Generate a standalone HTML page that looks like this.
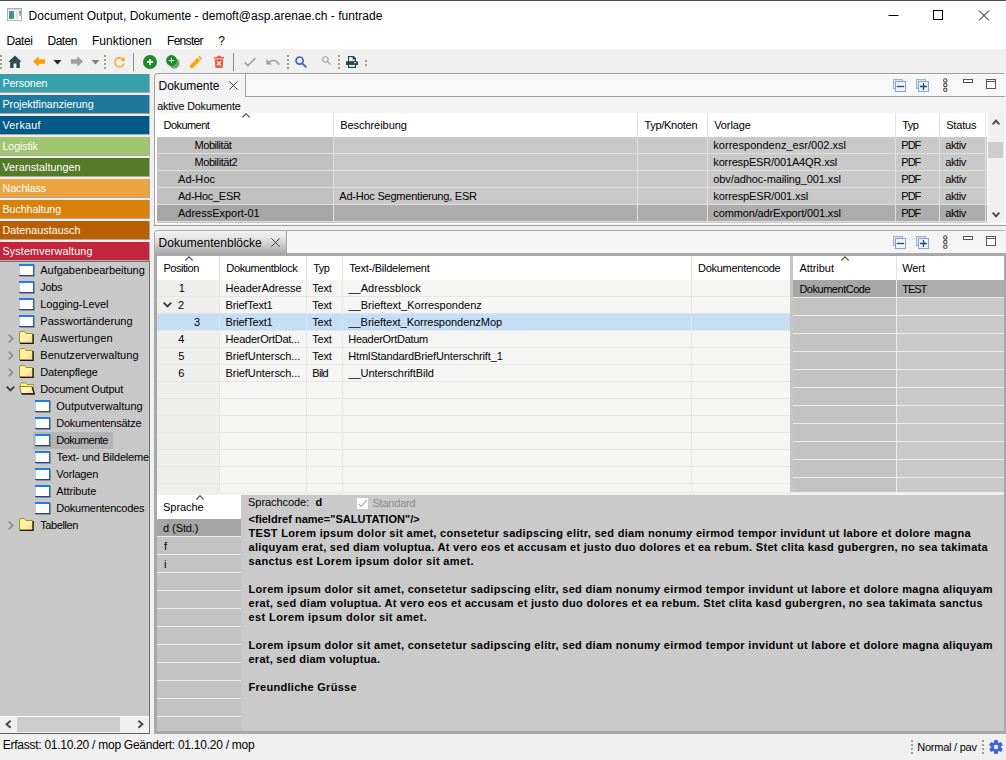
<!DOCTYPE html>
<html lang="de"><head><meta charset="utf-8"><title>Document Output, Dokumente</title>
<style>
html,body{margin:0;padding:0;background:#f0f0f0}
body{width:1006px;height:760px;overflow:hidden;background:#f0f0f0;position:relative;font-family:"Liberation Sans",sans-serif;font-size:11px;color:#000}
.b{position:absolute;box-sizing:border-box}
.t{position:absolute;white-space:pre;display:block}
svg{position:absolute;overflow:visible}
</style></head><body>

<div class="b" style="left:0px;top:0px;width:1006px;height:49px;background:#fff;"></div>
<div class="b" style="left:0px;top:0px;width:1006px;height:1px;background:#4a4a4a;"></div>
<svg style="left:7px;top:8px" width="15" height="13" viewBox="0 0 15 13"><defs><linearGradient id="ga" x1="0" y1="0" x2="1" y2="1"><stop offset="0" stop-color="#5a86c8"/><stop offset="0.500" stop-color="#3f9080"/><stop offset="1" stop-color="#45ad58"/></linearGradient><linearGradient id="gb" x1="0" y1="0" x2="0" y2="1"><stop offset="0" stop-color="#6a90c8"/><stop offset="1" stop-color="#a8dc98"/></linearGradient></defs><rect x="0.500" y="0.500" width="14" height="12" fill="#fbfbfb" stroke="#aab0b8"/><rect x="1" y="1" width="13" height="1" fill="#d4d8dc"/><rect x="2" y="3" width="5" height="8" fill="url(#ga)"/><rect x="8.500" y="3" width="2.500" height="8" fill="#e2e2e2"/><rect x="12" y="3" width="2" height="5" fill="url(#gb)"/><rect x="1" y="12" width="14" height="1" fill="#c0c4c8" opacity=".5"/></svg>
<span class="t " style="left:28.50px;top:8px;font-size:12px;line-height:16px;color:#000;letter-spacing:0.026px;">Document Output, Dokumente - demoft@asp.arenae.ch - funtrade</span>
<svg style="left:880px;top:8px" width="120" height="16" viewBox="0 0 120 16" fill="none" stroke="#000" stroke-width="1"><path d="M8.500 7.500h10"/><rect x="53.500" y="2.500" width="9" height="9"/><path d="M99 2.500l10 10M109 2.500l-10 10"/></svg>
<span class="t " style="left:6.50px;top:33px;font-size:12px;line-height:16px;color:#000;letter-spacing:-0.377px;">Datei</span>
<span class="t " style="left:47.50px;top:33px;font-size:12px;line-height:16px;color:#000;letter-spacing:-0.504px;">Daten</span>
<span class="t " style="left:92.00px;top:33px;font-size:12px;line-height:16px;color:#000;letter-spacing:0.025px;">Funktionen</span>
<span class="t " style="left:167.00px;top:33px;font-size:12px;line-height:16px;color:#000;letter-spacing:-0.697px;">Fenster</span>
<span class="t " style="left:218.30px;top:33px;font-size:12px;line-height:16px;color:#000;">?</span>
<div class="b" style="left:0px;top:49px;width:1006px;height:24px;background:#f0f0f0;"></div>
<div class="b" style="left:0px;top:55px;width:2px;height:2px;background:#a89c8a;"></div>
<div class="b" style="left:0px;top:59px;width:2px;height:2px;background:#a89c8a;"></div>
<div class="b" style="left:0px;top:63px;width:2px;height:2px;background:#a89c8a;"></div>
<div class="b" style="left:0px;top:67px;width:2px;height:2px;background:#a89c8a;"></div>
<svg style="left:8px;top:55px" width="14" height="13" viewBox="0 0 14 13"><path d="M7 0.500L0.300 6.800H2.200V13H5.600V8.600H8.400V13H11.800V6.800H13.700Z" fill="#2f4f4f"/></svg>
<svg style="left:33px;top:56px" width="12" height="11" viewBox="0 0 12 11"><path d="M0 5.500L5.800 0.200V3.300H12V7.700H5.800V10.800Z" fill="#ff9c0c"/></svg>
<svg style="left:53px;top:60px" width="9" height="5" viewBox="0 0 9 5"><path d="M0.500 0H8.500L4.500 4.500Z" fill="#222"/></svg>
<svg style="left:71px;top:56px" width="12" height="11" viewBox="0 0 12 11"><path d="M12 5.500L6.200 0.200V3.300H0V7.700H6.200V10.800Z" fill="#9e9e9e"/></svg>
<svg style="left:91px;top:60px" width="9" height="5" viewBox="0 0 9 5"><path d="M0.500 0H8.500L4.500 4.500Z" fill="#808080"/></svg>
<div class="b" style="left:104px;top:55px;width:2px;height:2px;background:#a89c8a;"></div>
<div class="b" style="left:104px;top:59px;width:2px;height:2px;background:#a89c8a;"></div>
<div class="b" style="left:104px;top:63px;width:2px;height:2px;background:#a89c8a;"></div>
<div class="b" style="left:104px;top:67px;width:2px;height:2px;background:#a89c8a;"></div>
<svg style="left:113px;top:56px" width="13" height="12" viewBox="0 0 13 12" fill="none"><path d="M9.800 3.200A4.600 4.600 0 1 0 10.900 7.400" stroke="#ffa010" stroke-width="1.300"/><path d="M11.600 0.800V4.900H7.500Z" fill="#ffa010"/></svg>
<div class="b" style="left:133px;top:53px;width:1px;height:18px;background:#8a8a8a;"></div>
<svg style="left:143px;top:55px" width="14" height="14" viewBox="0 0 14 14"><circle cx="7" cy="7" r="7" fill="#1e8a2b"/><path d="M7 4V10M4 7H10" stroke="#f4fff4" stroke-width="1.900"/></svg>
<svg style="left:166px;top:55px" width="14" height="14" viewBox="0 0 14 14"><circle cx="8.300" cy="8.300" r="5.200" fill="#6aa870"/><circle cx="5.500" cy="5.500" r="5.400" fill="#1e8a2b"/><path d="M5.500 2.800V8.200M2.800 5.500H8.200" stroke="#d8f0d8" stroke-width="1"/></svg>
<svg style="left:190px;top:56px" width="12" height="12" viewBox="0 0 12 12"><path d="M0 12V9.300L7.500 1.800L10.200 4.500L2.700 12Z" fill="#ffa200"/><path d="M8.300 1L9.100 0.200Q9.500 -0.100 9.900 0.200L11.800 2.100Q12.100 2.500 11.800 2.900L11 3.700Z" fill="#ffa200"/></svg>
<svg style="left:213px;top:55px" width="12" height="13" viewBox="0 0 12 13"><path d="M1 2H4L4.600 0.800H7.400L8 2H11V3.400H1Z" fill="#f25c41"/><path d="M1.700 4.200H10.300L9.800 12Q9.700 13 8.700 13H3.300Q2.300 13 2.200 12Z" fill="#f25c41"/><path d="M4.300 6.500L7.700 10.300M7.700 6.500L4.300 10.300" stroke="#fff" stroke-width="1.300"/></svg>
<div class="b" style="left:233px;top:53px;width:1px;height:18px;background:#8a8a8a;"></div>
<svg style="left:244px;top:57px" width="12" height="10" viewBox="0 0 12 10" fill="none"><path d="M0.700 5.400L4 8.600L11.400 1" stroke="#9e9e9e" stroke-width="1.500"/></svg>
<svg style="left:266px;top:58px" width="14" height="8" viewBox="0 0 14 8" fill="none"><path d="M2.500 4.500Q8.500 -0.500 13.300 6.500" stroke="#9e9e9e" stroke-width="1.500"/><path d="M0.300 0.800V6.600H6Z" fill="#9e9e9e"/></svg>
<div class="b" style="left:287px;top:55px;width:2px;height:2px;background:#a89c8a;"></div>
<div class="b" style="left:287px;top:59px;width:2px;height:2px;background:#a89c8a;"></div>
<div class="b" style="left:287px;top:63px;width:2px;height:2px;background:#a89c8a;"></div>
<div class="b" style="left:287px;top:67px;width:2px;height:2px;background:#a89c8a;"></div>
<svg style="left:295px;top:56px" width="12" height="12" viewBox="0 0 12 12" fill="none"><circle cx="4.600" cy="4.600" r="3.600" stroke="#3d62e0" stroke-width="1.700"/><path d="M7.300 7.300L11.300 11.300" stroke="#3d62e0" stroke-width="1.900"/></svg>
<svg style="left:322px;top:56px" width="9" height="9" viewBox="0 0 9 9" fill="none"><circle cx="3.400" cy="3.400" r="2.700" stroke="#a0a0a0" stroke-width="1.100"/><path d="M5.400 5.400L8.600 8.600" stroke="#a0a0a0" stroke-width="1.200"/></svg>
<div class="b" style="left:338px;top:55px;width:2px;height:2px;background:#a89c8a;"></div>
<div class="b" style="left:338px;top:59px;width:2px;height:2px;background:#a89c8a;"></div>
<div class="b" style="left:338px;top:63px;width:2px;height:2px;background:#a89c8a;"></div>
<div class="b" style="left:338px;top:67px;width:2px;height:2px;background:#a89c8a;"></div>
<svg style="left:346px;top:56px" width="12" height="12" viewBox="0 0 12 12"><path d="M2.600 0.600H7.400L9.400 2.600V6H2.600Z" fill="#fff" stroke="#1f4949" stroke-width="1.200"/><path d="M6.600 0.600H7.400L9.400 2.600V3.400H6.600Z" fill="#1f4949"/><rect x="0" y="5.200" width="12" height="3.700" rx="0.500" fill="#1f4949"/><rect x="7.900" y="6.200" width="2.200" height="1.100" fill="#dfeaea"/><rect x="2.600" y="8.300" width="6.800" height="3.100" fill="#fff" stroke="#1f4949" stroke-width="1.200"/></svg>
<div class="b" style="left:365px;top:60px;width:2px;height:2px;background:#a89c8a;"></div>
<div class="b" style="left:365px;top:64px;width:2px;height:2px;background:#a89c8a;"></div>
<div class="b" style="left:0px;top:74px;width:150px;height:187px;background:#f0ecec;"></div>
<div class="b" style="left:0px;top:74px;width:150px;height:19px;background:#b0a8a8;"></div>
<div class="b" style="left:0px;top:74px;width:149px;height:18px;background:#38a0ab;"></div>
<span class="t " style="left:2.50px;top:75px;font-size:10.7px;line-height:16px;color:#fff;letter-spacing:-0.115px;">Personen</span>
<div class="b" style="left:0px;top:95px;width:150px;height:19px;background:#b0a8a8;"></div>
<div class="b" style="left:0px;top:95px;width:149px;height:18px;background:#1e789c;"></div>
<span class="t " style="left:2.50px;top:96px;font-size:10.7px;line-height:16px;color:#fff;letter-spacing:-0.020px;">Projektfinanzierung</span>
<div class="b" style="left:0px;top:116px;width:150px;height:19px;background:#b0a8a8;"></div>
<div class="b" style="left:0px;top:116px;width:149px;height:18px;background:#005a85;"></div>
<span class="t " style="left:2.50px;top:117px;font-size:10.7px;line-height:16px;color:#fff;letter-spacing:0.282px;">Verkauf</span>
<div class="b" style="left:0px;top:137px;width:150px;height:19px;background:#b0a8a8;"></div>
<div class="b" style="left:0px;top:137px;width:149px;height:18px;background:#a0c56e;"></div>
<span class="t " style="left:2.50px;top:138px;font-size:10.7px;line-height:16px;color:#fff;letter-spacing:-0.115px;">Logistik</span>
<div class="b" style="left:0px;top:158px;width:150px;height:19px;background:#b0a8a8;"></div>
<div class="b" style="left:0px;top:158px;width:149px;height:18px;background:#557a2a;"></div>
<span class="t " style="left:2.50px;top:159px;font-size:10.7px;line-height:16px;color:#fff;letter-spacing:0.047px;">Veranstaltungen</span>
<div class="b" style="left:0px;top:179px;width:150px;height:19px;background:#b0a8a8;"></div>
<div class="b" style="left:0px;top:179px;width:149px;height:18px;background:#eba440;"></div>
<span class="t " style="left:2.50px;top:180px;font-size:10.7px;line-height:16px;color:#fff;letter-spacing:-0.037px;">Nachlass</span>
<div class="b" style="left:0px;top:200px;width:150px;height:19px;background:#b0a8a8;"></div>
<div class="b" style="left:0px;top:200px;width:149px;height:18px;background:#d8820c;"></div>
<span class="t " style="left:2.50px;top:201px;font-size:10.7px;line-height:16px;color:#fff;letter-spacing:-0.074px;">Buchhaltung</span>
<div class="b" style="left:0px;top:221px;width:150px;height:19px;background:#b0a8a8;"></div>
<div class="b" style="left:0px;top:221px;width:149px;height:18px;background:#ba5e02;"></div>
<span class="t " style="left:2.50px;top:222px;font-size:10.7px;line-height:16px;color:#fff;letter-spacing:0.052px;">Datenaustausch</span>
<div class="b" style="left:0px;top:242px;width:150px;height:19px;background:#b0a8a8;"></div>
<div class="b" style="left:0px;top:242px;width:149px;height:18px;background:#c1263c;"></div>
<span class="t " style="left:2.50px;top:243px;font-size:10.7px;line-height:16px;color:#fff;letter-spacing:0.172px;">Systemverwaltung</span>
<div class="b" style="left:0px;top:261px;width:150px;height:473px;background:#c8c8c8;border-top:1px solid #707070;border-right:1px solid #707070;border-bottom:1px solid #606060;"></div>
<svg style="left:19px;top:264px" width="16" height="13" viewBox="0 0 16 13"><rect x="15" y="1" width="1" height="12" fill="#77776a" opacity=".65"/><rect x="1" y="12" width="14" height="1" fill="#77776a" opacity=".65"/><rect x="0" y="0" width="15" height="12" fill="#1c7eee"/><rect x="0" y="2" width="1" height="9" fill="#a8d4ff"/><rect x="14" y="1" width="1" height="11" fill="#2262b4"/><rect x="0" y="11" width="15" height="1" fill="#2c3ca4"/><rect x="1" y="2" width="13" height="9" fill="#fff"/></svg>
<span class="t " style="left:40.30px;top:262px;font-size:11px;line-height:16px;color:#000;letter-spacing:-0.039px;">Aufgabenbearbeitung</span>
<svg style="left:19px;top:281px" width="16" height="13" viewBox="0 0 16 13"><rect x="15" y="1" width="1" height="12" fill="#77776a" opacity=".65"/><rect x="1" y="12" width="14" height="1" fill="#77776a" opacity=".65"/><rect x="0" y="0" width="15" height="12" fill="#1c7eee"/><rect x="0" y="2" width="1" height="9" fill="#a8d4ff"/><rect x="14" y="1" width="1" height="11" fill="#2262b4"/><rect x="0" y="11" width="15" height="1" fill="#2c3ca4"/><rect x="1" y="2" width="13" height="9" fill="#fff"/></svg>
<span class="t " style="left:40.30px;top:279px;font-size:11px;line-height:16px;color:#000;letter-spacing:-0.344px;">Jobs</span>
<svg style="left:19px;top:298px" width="16" height="13" viewBox="0 0 16 13"><rect x="15" y="1" width="1" height="12" fill="#77776a" opacity=".65"/><rect x="1" y="12" width="14" height="1" fill="#77776a" opacity=".65"/><rect x="0" y="0" width="15" height="12" fill="#1c7eee"/><rect x="0" y="2" width="1" height="9" fill="#a8d4ff"/><rect x="14" y="1" width="1" height="11" fill="#2262b4"/><rect x="0" y="11" width="15" height="1" fill="#2c3ca4"/><rect x="1" y="2" width="13" height="9" fill="#fff"/></svg>
<span class="t " style="left:40.30px;top:296px;font-size:11px;line-height:16px;color:#000;letter-spacing:-0.084px;">Logging-Level</span>
<svg style="left:19px;top:315px" width="16" height="13" viewBox="0 0 16 13"><rect x="15" y="1" width="1" height="12" fill="#77776a" opacity=".65"/><rect x="1" y="12" width="14" height="1" fill="#77776a" opacity=".65"/><rect x="0" y="0" width="15" height="12" fill="#1c7eee"/><rect x="0" y="2" width="1" height="9" fill="#a8d4ff"/><rect x="14" y="1" width="1" height="11" fill="#2262b4"/><rect x="0" y="11" width="15" height="1" fill="#2c3ca4"/><rect x="1" y="2" width="13" height="9" fill="#fff"/></svg>
<span class="t " style="left:40.30px;top:313px;font-size:11px;line-height:16px;color:#000;letter-spacing:0.039px;">Passwortänderung</span>
<svg style="left:19px;top:331px" width="15" height="13" viewBox="0 0 15 13"><path d="M0.500 12V2Q0.500 0.500 2 0.500H5.500L7 2.500H13.500V12Z" fill="#fff29e" stroke="#9c9624"/><path d="M6 11.500L13 4.500V11.500Z" fill="#ffd0a6" opacity=".75"/><path d="M14.200 3V12.300H1" fill="none" stroke="#1a1a10" stroke-width="1.200"/></svg>
<svg style="left:8px;top:334px" width="6" height="9" viewBox="0 0 6 9" fill="none"><path d="M0.800 0.700L4.600 4.500L0.800 8.300" stroke="#8c8c8c" stroke-width="1.700"/></svg>
<span class="t " style="left:40.30px;top:330px;font-size:11px;line-height:16px;color:#000;letter-spacing:0.180px;">Auswertungen</span>
<svg style="left:19px;top:348px" width="15" height="13" viewBox="0 0 15 13"><path d="M0.500 12V2Q0.500 0.500 2 0.500H5.500L7 2.500H13.500V12Z" fill="#fff29e" stroke="#9c9624"/><path d="M6 11.500L13 4.500V11.500Z" fill="#ffd0a6" opacity=".75"/><path d="M14.200 3V12.300H1" fill="none" stroke="#1a1a10" stroke-width="1.200"/></svg>
<svg style="left:8px;top:351px" width="6" height="9" viewBox="0 0 6 9" fill="none"><path d="M0.800 0.700L4.600 4.500L0.800 8.300" stroke="#8c8c8c" stroke-width="1.700"/></svg>
<span class="t " style="left:40.30px;top:347px;font-size:11px;line-height:16px;color:#000;letter-spacing:0.058px;">Benutzerverwaltung</span>
<svg style="left:19px;top:365px" width="15" height="13" viewBox="0 0 15 13"><path d="M0.500 12V2Q0.500 0.500 2 0.500H5.500L7 2.500H13.500V12Z" fill="#fff29e" stroke="#9c9624"/><path d="M6 11.500L13 4.500V11.500Z" fill="#ffd0a6" opacity=".75"/><path d="M14.200 3V12.300H1" fill="none" stroke="#1a1a10" stroke-width="1.200"/></svg>
<svg style="left:8px;top:368px" width="6" height="9" viewBox="0 0 6 9" fill="none"><path d="M0.800 0.700L4.600 4.500L0.800 8.300" stroke="#8c8c8c" stroke-width="1.700"/></svg>
<span class="t " style="left:40.30px;top:364px;font-size:11px;line-height:16px;color:#000;letter-spacing:-0.172px;">Datenpflege</span>
<svg style="left:19px;top:382px" width="16" height="13" viewBox="0 0 16 13"><path d="M1.500 9V2.500Q1.500 1 3 0.800H6.500L8 2.500H14.500V5" fill="#fff29e" stroke="#9c9624"/><path d="M0.500 4.500H13L15 11.500H2.500Z" fill="#fff6b8" stroke="#8c8620"/><path d="M7 11L12.500 5.500L14 11Z" fill="#ffd0a6" opacity=".7"/><path d="M2.500 12H15.300L13.300 5" fill="none" stroke="#1a1a10" stroke-width="1.300"/></svg>
<svg style="left:6px;top:386px" width="9" height="6" viewBox="0 0 9 6" fill="none"><path d="M0.700 0.700L4.500 4.500L8.300 0.700" stroke="#3c3c3c" stroke-width="1.900"/></svg>
<span class="t " style="left:40.30px;top:381px;font-size:11px;line-height:16px;color:#000;letter-spacing:-0.236px;">Document Output</span>
<svg style="left:35px;top:400px" width="16" height="13" viewBox="0 0 16 13"><rect x="15" y="1" width="1" height="12" fill="#77776a" opacity=".65"/><rect x="1" y="12" width="14" height="1" fill="#77776a" opacity=".65"/><rect x="0" y="0" width="15" height="12" fill="#1c7eee"/><rect x="0" y="2" width="1" height="9" fill="#a8d4ff"/><rect x="14" y="1" width="1" height="11" fill="#2262b4"/><rect x="0" y="11" width="15" height="1" fill="#2c3ca4"/><rect x="1" y="2" width="13" height="9" fill="#fff"/></svg>
<span class="t " style="left:56.30px;top:398px;font-size:11px;line-height:16px;color:#000;letter-spacing:0.012px;">Outputverwaltung</span>
<svg style="left:35px;top:417px" width="16" height="13" viewBox="0 0 16 13"><rect x="15" y="1" width="1" height="12" fill="#77776a" opacity=".65"/><rect x="1" y="12" width="14" height="1" fill="#77776a" opacity=".65"/><rect x="0" y="0" width="15" height="12" fill="#1c7eee"/><rect x="0" y="2" width="1" height="9" fill="#a8d4ff"/><rect x="14" y="1" width="1" height="11" fill="#2262b4"/><rect x="0" y="11" width="15" height="1" fill="#2c3ca4"/><rect x="1" y="2" width="13" height="9" fill="#fff"/></svg>
<span class="t " style="left:56.30px;top:415px;font-size:11px;line-height:16px;color:#000;letter-spacing:-0.247px;">Dokumentensätze</span>
<div class="b" style="left:33px;top:432px;width:80px;height:17px;background:#b4b4b4;"></div>
<svg style="left:35px;top:434px" width="16" height="13" viewBox="0 0 16 13"><rect x="15" y="1" width="1" height="12" fill="#77776a" opacity=".65"/><rect x="1" y="12" width="14" height="1" fill="#77776a" opacity=".65"/><rect x="0" y="0" width="15" height="12" fill="#1c7eee"/><rect x="0" y="2" width="1" height="9" fill="#a8d4ff"/><rect x="14" y="1" width="1" height="11" fill="#2262b4"/><rect x="0" y="11" width="15" height="1" fill="#2c3ca4"/><rect x="1" y="2" width="13" height="9" fill="#fff"/></svg>
<span class="t " style="left:56.30px;top:432px;font-size:11px;line-height:16px;color:#000;letter-spacing:-0.519px;">Dokumente</span>
<svg style="left:35px;top:451px" width="16" height="13" viewBox="0 0 16 13"><rect x="15" y="1" width="1" height="12" fill="#77776a" opacity=".65"/><rect x="1" y="12" width="14" height="1" fill="#77776a" opacity=".65"/><rect x="0" y="0" width="15" height="12" fill="#1c7eee"/><rect x="0" y="2" width="1" height="9" fill="#a8d4ff"/><rect x="14" y="1" width="1" height="11" fill="#2262b4"/><rect x="0" y="11" width="15" height="1" fill="#2c3ca4"/><rect x="1" y="2" width="13" height="9" fill="#fff"/></svg>
<span class="t " style="left:56.40px;top:449px;font-size:11px;line-height:16px;color:#000;letter-spacing:-0.220px;max-width:92.29999999999998px;overflow:hidden;">Text- und Bildelemente</span>
<svg style="left:35px;top:468px" width="16" height="13" viewBox="0 0 16 13"><rect x="15" y="1" width="1" height="12" fill="#77776a" opacity=".65"/><rect x="1" y="12" width="14" height="1" fill="#77776a" opacity=".65"/><rect x="0" y="0" width="15" height="12" fill="#1c7eee"/><rect x="0" y="2" width="1" height="9" fill="#a8d4ff"/><rect x="14" y="1" width="1" height="11" fill="#2262b4"/><rect x="0" y="11" width="15" height="1" fill="#2c3ca4"/><rect x="1" y="2" width="13" height="9" fill="#fff"/></svg>
<span class="t " style="left:56.30px;top:466px;font-size:11px;line-height:16px;color:#000;letter-spacing:-0.204px;">Vorlagen</span>
<svg style="left:35px;top:485px" width="16" height="13" viewBox="0 0 16 13"><rect x="15" y="1" width="1" height="12" fill="#77776a" opacity=".65"/><rect x="1" y="12" width="14" height="1" fill="#77776a" opacity=".65"/><rect x="0" y="0" width="15" height="12" fill="#1c7eee"/><rect x="0" y="2" width="1" height="9" fill="#a8d4ff"/><rect x="14" y="1" width="1" height="11" fill="#2262b4"/><rect x="0" y="11" width="15" height="1" fill="#2c3ca4"/><rect x="1" y="2" width="13" height="9" fill="#fff"/></svg>
<span class="t " style="left:56.30px;top:483px;font-size:11px;line-height:16px;color:#000;letter-spacing:-0.108px;">Attribute</span>
<svg style="left:35px;top:502px" width="16" height="13" viewBox="0 0 16 13"><rect x="15" y="1" width="1" height="12" fill="#77776a" opacity=".65"/><rect x="1" y="12" width="14" height="1" fill="#77776a" opacity=".65"/><rect x="0" y="0" width="15" height="12" fill="#1c7eee"/><rect x="0" y="2" width="1" height="9" fill="#a8d4ff"/><rect x="14" y="1" width="1" height="11" fill="#2262b4"/><rect x="0" y="11" width="15" height="1" fill="#2c3ca4"/><rect x="1" y="2" width="13" height="9" fill="#fff"/></svg>
<span class="t " style="left:56.30px;top:500px;font-size:11px;line-height:16px;color:#000;letter-spacing:-0.258px;">Dokumentencodes</span>
<svg style="left:19px;top:518px" width="15" height="13" viewBox="0 0 15 13"><path d="M0.500 12V2Q0.500 0.500 2 0.500H5.500L7 2.500H13.500V12Z" fill="#fff29e" stroke="#9c9624"/><path d="M6 11.500L13 4.500V11.500Z" fill="#ffd0a6" opacity=".75"/><path d="M14.200 3V12.300H1" fill="none" stroke="#1a1a10" stroke-width="1.200"/></svg>
<svg style="left:8px;top:521px" width="6" height="9" viewBox="0 0 6 9" fill="none"><path d="M0.800 0.700L4.600 4.500L0.800 8.300" stroke="#8c8c8c" stroke-width="1.700"/></svg>
<span class="t " style="left:40.30px;top:517px;font-size:11px;line-height:16px;color:#000;letter-spacing:-0.425px;">Tabellen</span>
<div class="b" style="left:0px;top:716px;width:149px;height:1px;background:#fff;"></div>
<div class="b" style="left:0px;top:717px;width:149px;height:16px;background:#f0f0f0;"></div>
<div class="b" style="left:17px;top:717px;width:103px;height:15px;background:#cdcdcd;"></div>
<svg style="left:5px;top:720px" width="7" height="8" viewBox="0 0 7 8" fill="none"><path d="M5.600 0.700L1.600 4.200L5.600 7.700" stroke="#4a4a4a" stroke-width="2"/></svg>
<svg style="left:137px;top:720px" width="7" height="8" viewBox="0 0 7 8" fill="none"><path d="M1.400 0.700L5.400 4.200L1.400 7.700" stroke="#4a4a4a" stroke-width="2"/></svg>
<span class="t " style="left:2.75px;top:737px;font-size:12px;line-height:16px;color:#000;letter-spacing:-0.262px;">Erfasst: 01.10.20 / mop Geändert: 01.10.20 / mop</span>
<div class="b" style="left:911px;top:740px;width:2px;height:2px;background:#a89c8a;"></div>
<div class="b" style="left:911px;top:744px;width:2px;height:2px;background:#a89c8a;"></div>
<div class="b" style="left:911px;top:748px;width:2px;height:2px;background:#a89c8a;"></div>
<div class="b" style="left:911px;top:752px;width:2px;height:2px;background:#a89c8a;"></div>
<span class="t " style="left:917.25px;top:739px;font-size:11px;line-height:16px;color:#000;letter-spacing:-0.245px;">Normal / pav</span>
<div class="b" style="left:982px;top:740px;width:2px;height:2px;background:#a89c8a;"></div>
<div class="b" style="left:982px;top:744px;width:2px;height:2px;background:#a89c8a;"></div>
<div class="b" style="left:982px;top:748px;width:2px;height:2px;background:#a89c8a;"></div>
<div class="b" style="left:982px;top:752px;width:2px;height:2px;background:#a89c8a;"></div>
<svg style="left:989px;top:740px" width="14" height="14" viewBox="0 0 14 14"><g fill="#3d64de"><circle cx="7" cy="7" r="5.100"/><rect x="5" y="0" width="4" height="14" rx="1.200"/><rect x="5" y="0" width="4" height="14" rx="1.200" transform="rotate(60 7 7)"/><rect x="5" y="0" width="4" height="14" rx="1.200" transform="rotate(120 7 7)"/></g><circle cx="7" cy="7" r="2.200" fill="#f0f0f0"/></svg>
<div class="b" style="left:154px;top:73px;width:852px;height:153px;background:#f4f4f4;border:1px solid #a0a0a0;border-right:none;border-radius:4px 4px 0 0;"></div>
<div class="b" style="left:246px;top:74px;width:760px;height:22px;background:#f8f8f8;"></div>
<div class="b" style="left:245px;top:74px;width:1px;height:23px;background:#a0a0a0;"></div>
<div class="b" style="left:245px;top:96px;width:760px;height:1px;background:#a0a0a0;"></div>
<span class="t " style="left:158.60px;top:78px;font-size:12px;line-height:16px;color:#000;letter-spacing:-0.071px;">Dokumente</span>
<svg style="left:229px;top:81px" width="9" height="9" viewBox="0 0 9 9" fill="none"><path d="M0.400 0.400L8.600 8.600M8.600 0.400L0.400 8.600" stroke="#2a2a2a" stroke-width="0.900"/></svg>
<svg style="left:893px;top:79px" width="14" height="13" viewBox="0 0 14 13" fill="none"><rect x="0.500" y="0.500" width="9" height="9" fill="#d4e6f8" stroke="#9db2d0"/><rect x="2.500" y="2.500" width="10" height="10" fill="#edf3fb" stroke="#8fa2c0"/><path d="M3.800 7.500H11.200" stroke="#1c4a78" stroke-width="1.300"/></svg>
<svg style="left:916px;top:79px" width="14" height="13" viewBox="0 0 14 13" fill="none"><rect x="0.500" y="0.500" width="9" height="9" fill="#d4e6f8" stroke="#9db2d0"/><rect x="2.500" y="2.500" width="10" height="10" fill="#edf3fb" stroke="#8fa2c0"/><path d="M4 7.500H11M7.500 4V11" stroke="#1c4a78" stroke-width="1.300"/></svg>
<svg style="left:942px;top:78px" width="7" height="15" viewBox="0 0 7 15" fill="#fff" stroke="#505050" stroke-width="1.100"><circle cx="3.300" cy="2.400" r="1.700"/><circle cx="3.300" cy="7.100" r="1.700"/><circle cx="3.300" cy="11.800" r="1.700"/></svg>
<svg style="left:963px;top:79px" width="10" height="4" viewBox="0 0 10 4"><rect x="0.500" y="0.500" width="9" height="3" fill="#fff" stroke="#555"/></svg>
<svg style="left:986px;top:79px" width="10" height="10" viewBox="0 0 10 10"><rect x="0.500" y="0.500" width="9" height="9" fill="#fff" stroke="#555"/><path d="M0.500 2.500H9.500" stroke="#555"/></svg>
<span class="t " style="left:157.25px;top:98px;font-size:10.7px;line-height:16px;color:#000;letter-spacing:-0.140px;">aktive Dokumente</span>
<div class="b" style="left:155px;top:113px;width:851px;height:111px;background:#fff;"></div>
<div class="b" style="left:333px;top:113px;width:1px;height:24px;background:#e2e2e2;"></div>
<div class="b" style="left:637px;top:113px;width:1px;height:24px;background:#e2e2e2;"></div>
<div class="b" style="left:707px;top:113px;width:1px;height:24px;background:#e2e2e2;"></div>
<div class="b" style="left:895px;top:113px;width:1px;height:24px;background:#e2e2e2;"></div>
<div class="b" style="left:939px;top:113px;width:1px;height:24px;background:#e2e2e2;"></div>
<div class="b" style="left:985px;top:113px;width:1px;height:24px;background:#e2e2e2;"></div>
<span class="t " style="left:163.50px;top:117px;font-size:11px;line-height:16px;color:#000;letter-spacing:-0.548px;">Dokument</span>
<span class="t " style="left:340.20px;top:117px;font-size:11px;line-height:16px;color:#000;letter-spacing:-0.051px;">Beschreibung</span>
<span class="t " style="left:644.40px;top:117px;font-size:11px;line-height:16px;color:#000;letter-spacing:-0.283px;">Typ/Knoten</span>
<span class="t " style="left:714.20px;top:117px;font-size:11px;line-height:16px;color:#000;letter-spacing:-0.102px;">Vorlage</span>
<span class="t " style="left:902.20px;top:117px;font-size:11px;line-height:16px;color:#000;letter-spacing:-0.466px;">Typ</span>
<span class="t " style="left:946.20px;top:117px;font-size:11px;line-height:16px;color:#000;letter-spacing:-0.177px;">Status</span>
<svg style="left:242px;top:113px" width="8" height="5" viewBox="0 0 8 5" fill="none"><path d="M0.400 4.300L4 0.700L7.600 4.300" stroke="#3c3c3c" stroke-width="1.150"/></svg>
<div class="b" style="left:157px;top:137px;width:830px;height:86px;background:#dedede;"></div>
<div class="b" style="left:157px;top:137px;width:176px;height:16px;background:#c0c0c0;"></div>
<div class="b" style="left:334px;top:137px;width:303px;height:16px;background:#c9c9c9;"></div>
<div class="b" style="left:638px;top:137px;width:69px;height:16px;background:#c9c9c9;"></div>
<div class="b" style="left:708px;top:137px;width:187px;height:16px;background:#c9c9c9;"></div>
<div class="b" style="left:896px;top:137px;width:43px;height:16px;background:#c9c9c9;"></div>
<div class="b" style="left:940px;top:137px;width:45px;height:16px;background:#c9c9c9;"></div>
<div class="b" style="left:986px;top:137px;width:1px;height:16px;background:#c9c9c9;"></div>
<span class="t " style="left:194.50px;top:137px;font-size:11px;line-height:16px;color:#000;letter-spacing:-0.445px;">Mobilität</span>
<span class="t " style="left:713.30px;top:137px;font-size:11px;line-height:16px;color:#000;letter-spacing:0.026px;">korrespondenz_esr/002.xsl</span>
<span class="t " style="left:901.30px;top:137px;font-size:11px;line-height:16px;color:#000;letter-spacing:-1.000px;">PDF</span>
<span class="t " style="left:945.30px;top:137px;font-size:11px;line-height:16px;color:#000;letter-spacing:-0.404px;">aktiv</span>
<div class="b" style="left:157px;top:154px;width:176px;height:16px;background:#c0c0c0;"></div>
<div class="b" style="left:334px;top:154px;width:303px;height:16px;background:#c9c9c9;"></div>
<div class="b" style="left:638px;top:154px;width:69px;height:16px;background:#c9c9c9;"></div>
<div class="b" style="left:708px;top:154px;width:187px;height:16px;background:#c9c9c9;"></div>
<div class="b" style="left:896px;top:154px;width:43px;height:16px;background:#c9c9c9;"></div>
<div class="b" style="left:940px;top:154px;width:45px;height:16px;background:#c9c9c9;"></div>
<div class="b" style="left:986px;top:154px;width:1px;height:16px;background:#c9c9c9;"></div>
<span class="t " style="left:194.50px;top:154px;font-size:11px;line-height:16px;color:#000;letter-spacing:-0.431px;">Mobilität2</span>
<span class="t " style="left:713.30px;top:154px;font-size:11px;line-height:16px;color:#000;letter-spacing:-0.150px;">korrespESR/001A4QR.xsl</span>
<span class="t " style="left:901.30px;top:154px;font-size:11px;line-height:16px;color:#000;letter-spacing:-1.000px;">PDF</span>
<span class="t " style="left:945.30px;top:154px;font-size:11px;line-height:16px;color:#000;letter-spacing:-0.404px;">aktiv</span>
<div class="b" style="left:157px;top:171px;width:176px;height:16px;background:#c0c0c0;"></div>
<div class="b" style="left:334px;top:171px;width:303px;height:16px;background:#c9c9c9;"></div>
<div class="b" style="left:638px;top:171px;width:69px;height:16px;background:#c9c9c9;"></div>
<div class="b" style="left:708px;top:171px;width:187px;height:16px;background:#c9c9c9;"></div>
<div class="b" style="left:896px;top:171px;width:43px;height:16px;background:#c9c9c9;"></div>
<div class="b" style="left:940px;top:171px;width:45px;height:16px;background:#c9c9c9;"></div>
<div class="b" style="left:986px;top:171px;width:1px;height:16px;background:#c9c9c9;"></div>
<span class="t " style="left:178.00px;top:171px;font-size:11px;line-height:16px;color:#000;letter-spacing:0.083px;">Ad-Hoc</span>
<span class="t " style="left:713.30px;top:171px;font-size:11px;line-height:16px;color:#000;letter-spacing:-0.106px;">obv/adhoc-mailing_001.xsl</span>
<span class="t " style="left:901.30px;top:171px;font-size:11px;line-height:16px;color:#000;letter-spacing:-1.000px;">PDF</span>
<span class="t " style="left:945.30px;top:171px;font-size:11px;line-height:16px;color:#000;letter-spacing:-0.404px;">aktiv</span>
<div class="b" style="left:157px;top:188px;width:176px;height:16px;background:#c0c0c0;"></div>
<div class="b" style="left:334px;top:188px;width:303px;height:16px;background:#c9c9c9;"></div>
<div class="b" style="left:638px;top:188px;width:69px;height:16px;background:#c9c9c9;"></div>
<div class="b" style="left:708px;top:188px;width:187px;height:16px;background:#c9c9c9;"></div>
<div class="b" style="left:896px;top:188px;width:43px;height:16px;background:#c9c9c9;"></div>
<div class="b" style="left:940px;top:188px;width:45px;height:16px;background:#c9c9c9;"></div>
<div class="b" style="left:986px;top:188px;width:1px;height:16px;background:#c9c9c9;"></div>
<span class="t " style="left:178.00px;top:188px;font-size:11px;line-height:16px;color:#000;letter-spacing:-0.280px;">Ad-Hoc_ESR</span>
<span class="t " style="left:339.30px;top:188px;font-size:11px;line-height:16px;color:#000;letter-spacing:-0.224px;">Ad-Hoc Segmentierung, ESR</span>
<span class="t " style="left:713.30px;top:188px;font-size:11px;line-height:16px;color:#000;letter-spacing:-0.136px;">korrespESR/001.xsl</span>
<span class="t " style="left:901.30px;top:188px;font-size:11px;line-height:16px;color:#000;letter-spacing:-1.000px;">PDF</span>
<span class="t " style="left:945.30px;top:188px;font-size:11px;line-height:16px;color:#000;letter-spacing:-0.404px;">aktiv</span>
<div class="b" style="left:157px;top:205px;width:176px;height:16px;background:#a6a6a6;"></div>
<div class="b" style="left:334px;top:205px;width:303px;height:16px;background:#adadad;"></div>
<div class="b" style="left:638px;top:205px;width:69px;height:16px;background:#adadad;"></div>
<div class="b" style="left:708px;top:205px;width:187px;height:16px;background:#adadad;"></div>
<div class="b" style="left:896px;top:205px;width:43px;height:16px;background:#adadad;"></div>
<div class="b" style="left:940px;top:205px;width:45px;height:16px;background:#adadad;"></div>
<div class="b" style="left:986px;top:205px;width:1px;height:16px;background:#adadad;"></div>
<span class="t " style="left:178.00px;top:205px;font-size:11px;line-height:16px;color:#000;letter-spacing:-0.016px;">AdressExport-01</span>
<span class="t " style="left:713.30px;top:205px;font-size:11px;line-height:16px;color:#000;letter-spacing:-0.136px;">common/adrExport/001.xsl</span>
<span class="t " style="left:901.30px;top:205px;font-size:11px;line-height:16px;color:#000;letter-spacing:-1.000px;">PDF</span>
<span class="t " style="left:945.30px;top:205px;font-size:11px;line-height:16px;color:#000;letter-spacing:-0.404px;">aktiv</span>
<div class="b" style="left:157px;top:222px;width:176px;height:1px;background:#c0c0c0;"></div>
<div class="b" style="left:334px;top:222px;width:303px;height:1px;background:#c9c9c9;"></div>
<div class="b" style="left:638px;top:222px;width:69px;height:1px;background:#c9c9c9;"></div>
<div class="b" style="left:708px;top:222px;width:187px;height:1px;background:#c9c9c9;"></div>
<div class="b" style="left:896px;top:222px;width:43px;height:1px;background:#c9c9c9;"></div>
<div class="b" style="left:940px;top:222px;width:45px;height:1px;background:#c9c9c9;"></div>
<div class="b" style="left:986px;top:222px;width:1px;height:1px;background:#c9c9c9;"></div>
<div class="b" style="left:987px;top:113px;width:1px;height:110px;background:#fafafa;"></div>
<div class="b" style="left:988px;top:113px;width:16px;height:110px;background:#f0f0f0;"></div>
<div class="b" style="left:1004px;top:113px;width:2px;height:110px;background:#f6f6f6;"></div>
<div class="b" style="left:988px;top:142px;width:15px;height:16px;background:#cdcdcd;"></div>
<svg style="left:992px;top:119px" width="8" height="6" viewBox="0 0 8 6" fill="none"><path d="M0.700 5.300L4 1.700L7.300 5.300" stroke="#484848" stroke-width="1.900"/></svg>
<svg style="left:992px;top:212px" width="8" height="6" viewBox="0 0 8 6" fill="none"><path d="M0.700 0.700L4 4.300L7.300 0.700" stroke="#484848" stroke-width="1.900"/></svg>
<div class="b" style="left:154px;top:230px;width:852px;height:504px;background:#a8a8a8;border-radius:4px 4px 0 0;"></div>
<div class="b" style="left:155px;top:231px;width:851px;height:22px;background:#f5f5f5;border-radius:3px 0 0 0;"></div>
<div class="b" style="left:155px;top:231px;width:132px;height:22px;background:;border-radius:3px 0 0 0;background:linear-gradient(#f2f2f2 0%,#e6e6e6 30%,#c6c6c6 70%,#acacac 100%);border-right:1px solid #a8a8a8;"></div>
<span class="t " style="left:158.60px;top:235px;font-size:12px;line-height:16px;color:#000;letter-spacing:0.031px;">Dokumentenblöcke</span>
<svg style="left:271px;top:238px" width="9" height="9" viewBox="0 0 9 9" fill="none"><path d="M0.400 0.400L8.600 8.600M8.600 0.400L0.400 8.600" stroke="#2a2a2a" stroke-width="0.900"/></svg>
<svg style="left:893px;top:236px" width="14" height="13" viewBox="0 0 14 13" fill="none"><rect x="0.500" y="0.500" width="9" height="9" fill="#d4e6f8" stroke="#9db2d0"/><rect x="2.500" y="2.500" width="10" height="10" fill="#edf3fb" stroke="#8fa2c0"/><path d="M3.800 7.500H11.200" stroke="#1c4a78" stroke-width="1.300"/></svg>
<svg style="left:916px;top:236px" width="14" height="13" viewBox="0 0 14 13" fill="none"><rect x="0.500" y="0.500" width="9" height="9" fill="#d4e6f8" stroke="#9db2d0"/><rect x="2.500" y="2.500" width="10" height="10" fill="#edf3fb" stroke="#8fa2c0"/><path d="M4 7.500H11M7.500 4V11" stroke="#1c4a78" stroke-width="1.300"/></svg>
<svg style="left:942px;top:235px" width="7" height="15" viewBox="0 0 7 15" fill="#fff" stroke="#505050" stroke-width="1.100"><circle cx="3.300" cy="2.400" r="1.700"/><circle cx="3.300" cy="7.100" r="1.700"/><circle cx="3.300" cy="11.800" r="1.700"/></svg>
<svg style="left:963px;top:236px" width="10" height="4" viewBox="0 0 10 4"><rect x="0.500" y="0.500" width="9" height="3" fill="#fff" stroke="#555"/></svg>
<svg style="left:986px;top:236px" width="10" height="10" viewBox="0 0 10 10"><rect x="0.500" y="0.500" width="9" height="9" fill="#fff" stroke="#555"/><path d="M0.500 2.500H9.500" stroke="#555"/></svg>
<div class="b" style="left:157px;top:256px;width:633px;height:236px;background:#e6e6e6;"></div>
<div class="b" style="left:157px;top:256px;width:62px;height:24px;background:#fff;"></div>
<div class="b" style="left:220px;top:256px;width:86px;height:24px;background:#fff;"></div>
<div class="b" style="left:219px;top:256px;width:1px;height:24px;background:#e2e2e2;"></div>
<div class="b" style="left:307px;top:256px;width:35px;height:24px;background:#fff;"></div>
<div class="b" style="left:306px;top:256px;width:1px;height:24px;background:#e2e2e2;"></div>
<div class="b" style="left:343px;top:256px;width:348px;height:24px;background:#fff;"></div>
<div class="b" style="left:342px;top:256px;width:1px;height:24px;background:#e2e2e2;"></div>
<div class="b" style="left:692px;top:256px;width:98px;height:24px;background:#fff;"></div>
<div class="b" style="left:691px;top:256px;width:1px;height:24px;background:#e2e2e2;"></div>
<span class="t " style="left:163.40px;top:260px;font-size:11px;line-height:16px;color:#000;letter-spacing:-0.463px;">Position</span>
<span class="t " style="left:226.30px;top:260px;font-size:11px;line-height:16px;color:#000;letter-spacing:-0.361px;">Dokumentblock</span>
<span class="t " style="left:313.20px;top:260px;font-size:11px;line-height:16px;color:#000;letter-spacing:-0.566px;">Typ</span>
<span class="t " style="left:349.30px;top:260px;font-size:11px;line-height:16px;color:#000;letter-spacing:-0.248px;">Text-/Bildelement</span>
<span class="t " style="left:698.00px;top:260px;font-size:11px;line-height:16px;color:#000;letter-spacing:-0.271px;">Dokumentencode</span>
<svg style="left:184.5px;top:256px" width="8" height="5" viewBox="0 0 8 5" fill="none"><path d="M0.400 4.300L4 0.700L7.600 4.300" stroke="#3c3c3c" stroke-width="1.150"/></svg>
<div class="b" style="left:157px;top:280px;width:62px;height:16px;background:#eeeeec;"></div>
<div class="b" style="left:220px;top:280px;width:86px;height:16px;background:#f5f5f3;"></div>
<div class="b" style="left:307px;top:280px;width:35px;height:16px;background:#f5f5f3;"></div>
<div class="b" style="left:343px;top:280px;width:348px;height:16px;background:#f5f5f3;"></div>
<div class="b" style="left:692px;top:280px;width:98px;height:16px;background:#f5f5f3;"></div>
<span class="t " style="left:178.70px;top:280px;font-size:11px;line-height:16px;color:#000;">1</span>
<span class="t " style="left:225.60px;top:280px;font-size:11px;line-height:16px;color:#000;letter-spacing:-0.044px;">HeaderAdresse</span>
<span class="t " style="left:312.30px;top:280px;font-size:11px;line-height:16px;color:#000;letter-spacing:-0.191px;">Text</span>
<span class="t " style="left:348.48px;top:280px;font-size:11px;line-height:16px;color:#000;letter-spacing:0.021px;">__Adressblock</span>
<div class="b" style="left:157px;top:297px;width:62px;height:16px;background:#eeeeec;"></div>
<div class="b" style="left:220px;top:297px;width:86px;height:16px;background:#f5f5f3;"></div>
<div class="b" style="left:307px;top:297px;width:35px;height:16px;background:#f5f5f3;"></div>
<div class="b" style="left:343px;top:297px;width:348px;height:16px;background:#f5f5f3;"></div>
<div class="b" style="left:692px;top:297px;width:98px;height:16px;background:#f5f5f3;"></div>
<span class="t " style="left:178.00px;top:297px;font-size:11px;line-height:16px;color:#000;">2</span>
<span class="t " style="left:225.60px;top:297px;font-size:11px;line-height:16px;color:#000;letter-spacing:-0.201px;">BriefText1</span>
<span class="t " style="left:312.30px;top:297px;font-size:11px;line-height:16px;color:#000;letter-spacing:-0.191px;">Text</span>
<span class="t " style="left:348.48px;top:297px;font-size:11px;line-height:16px;color:#000;letter-spacing:0.001px;">__Brieftext_Korrespondenz</span>
<div class="b" style="left:157px;top:314px;width:633px;height:16px;background:#c5def5;"></div>
<div class="b" style="left:157px;top:313px;width:633px;height:1px;background:#d8e6f2;"></div>
<div class="b" style="left:219px;top:314px;width:1px;height:16px;background:#d3e6f8;"></div>
<div class="b" style="left:306px;top:314px;width:1px;height:16px;background:#d3e6f8;"></div>
<div class="b" style="left:342px;top:314px;width:1px;height:16px;background:#d3e6f8;"></div>
<div class="b" style="left:691px;top:314px;width:1px;height:16px;background:#d3e6f8;"></div>
<span class="t " style="left:194.00px;top:314px;font-size:11px;line-height:16px;color:#000;">3</span>
<span class="t " style="left:225.60px;top:314px;font-size:11px;line-height:16px;color:#000;letter-spacing:-0.201px;">BriefText1</span>
<span class="t " style="left:312.30px;top:314px;font-size:11px;line-height:16px;color:#000;letter-spacing:-0.191px;">Text</span>
<span class="t " style="left:348.48px;top:314px;font-size:11px;line-height:16px;color:#000;letter-spacing:-0.040px;">__Brieftext_KorrespondenzMop</span>
<div class="b" style="left:157px;top:331px;width:62px;height:16px;background:#eeeeec;"></div>
<div class="b" style="left:220px;top:331px;width:86px;height:16px;background:#f5f5f3;"></div>
<div class="b" style="left:307px;top:331px;width:35px;height:16px;background:#f5f5f3;"></div>
<div class="b" style="left:343px;top:331px;width:348px;height:16px;background:#f5f5f3;"></div>
<div class="b" style="left:692px;top:331px;width:98px;height:16px;background:#f5f5f3;"></div>
<span class="t " style="left:178.30px;top:331px;font-size:11px;line-height:16px;color:#000;">4</span>
<span class="t " style="left:225.60px;top:331px;font-size:11px;line-height:16px;color:#000;letter-spacing:-0.246px;">HeaderOrtDat...</span>
<span class="t " style="left:312.30px;top:331px;font-size:11px;line-height:16px;color:#000;letter-spacing:-0.191px;">Text</span>
<span class="t " style="left:348.30px;top:331px;font-size:11px;line-height:16px;color:#000;letter-spacing:-0.296px;">HeaderOrtDatum</span>
<div class="b" style="left:157px;top:348px;width:62px;height:16px;background:#eeeeec;"></div>
<div class="b" style="left:220px;top:348px;width:86px;height:16px;background:#f5f5f3;"></div>
<div class="b" style="left:307px;top:348px;width:35px;height:16px;background:#f5f5f3;"></div>
<div class="b" style="left:343px;top:348px;width:348px;height:16px;background:#f5f5f3;"></div>
<div class="b" style="left:692px;top:348px;width:98px;height:16px;background:#f5f5f3;"></div>
<span class="t " style="left:178.30px;top:348px;font-size:11px;line-height:16px;color:#000;">5</span>
<span class="t " style="left:225.60px;top:348px;font-size:11px;line-height:16px;color:#000;letter-spacing:-0.073px;">BriefUntersch...</span>
<span class="t " style="left:312.30px;top:348px;font-size:11px;line-height:16px;color:#000;letter-spacing:-0.191px;">Text</span>
<span class="t " style="left:348.30px;top:348px;font-size:11px;line-height:16px;color:#000;letter-spacing:-0.128px;">HtmlStandardBriefUnterschrift_1</span>
<div class="b" style="left:157px;top:365px;width:62px;height:16px;background:#eeeeec;"></div>
<div class="b" style="left:220px;top:365px;width:86px;height:16px;background:#f5f5f3;"></div>
<div class="b" style="left:307px;top:365px;width:35px;height:16px;background:#f5f5f3;"></div>
<div class="b" style="left:343px;top:365px;width:348px;height:16px;background:#f5f5f3;"></div>
<div class="b" style="left:692px;top:365px;width:98px;height:16px;background:#f5f5f3;"></div>
<span class="t " style="left:178.30px;top:365px;font-size:11px;line-height:16px;color:#000;">6</span>
<span class="t " style="left:225.60px;top:365px;font-size:11px;line-height:16px;color:#000;letter-spacing:-0.073px;">BriefUntersch...</span>
<span class="t " style="left:312.30px;top:365px;font-size:11px;line-height:16px;color:#000;letter-spacing:-0.683px;">Bild</span>
<span class="t " style="left:348.48px;top:365px;font-size:11px;line-height:16px;color:#000;letter-spacing:-0.082px;">__UnterschriftBild</span>
<div class="b" style="left:157px;top:382px;width:62px;height:16px;background:#eeeeec;"></div>
<div class="b" style="left:220px;top:382px;width:86px;height:16px;background:#f5f5f3;"></div>
<div class="b" style="left:307px;top:382px;width:35px;height:16px;background:#f5f5f3;"></div>
<div class="b" style="left:343px;top:382px;width:348px;height:16px;background:#f5f5f3;"></div>
<div class="b" style="left:692px;top:382px;width:98px;height:16px;background:#f5f5f3;"></div>
<div class="b" style="left:157px;top:399px;width:62px;height:16px;background:#eeeeec;"></div>
<div class="b" style="left:220px;top:399px;width:86px;height:16px;background:#f5f5f3;"></div>
<div class="b" style="left:307px;top:399px;width:35px;height:16px;background:#f5f5f3;"></div>
<div class="b" style="left:343px;top:399px;width:348px;height:16px;background:#f5f5f3;"></div>
<div class="b" style="left:692px;top:399px;width:98px;height:16px;background:#f5f5f3;"></div>
<div class="b" style="left:157px;top:416px;width:62px;height:16px;background:#eeeeec;"></div>
<div class="b" style="left:220px;top:416px;width:86px;height:16px;background:#f5f5f3;"></div>
<div class="b" style="left:307px;top:416px;width:35px;height:16px;background:#f5f5f3;"></div>
<div class="b" style="left:343px;top:416px;width:348px;height:16px;background:#f5f5f3;"></div>
<div class="b" style="left:692px;top:416px;width:98px;height:16px;background:#f5f5f3;"></div>
<div class="b" style="left:157px;top:433px;width:62px;height:16px;background:#eeeeec;"></div>
<div class="b" style="left:220px;top:433px;width:86px;height:16px;background:#f5f5f3;"></div>
<div class="b" style="left:307px;top:433px;width:35px;height:16px;background:#f5f5f3;"></div>
<div class="b" style="left:343px;top:433px;width:348px;height:16px;background:#f5f5f3;"></div>
<div class="b" style="left:692px;top:433px;width:98px;height:16px;background:#f5f5f3;"></div>
<div class="b" style="left:157px;top:450px;width:62px;height:16px;background:#eeeeec;"></div>
<div class="b" style="left:220px;top:450px;width:86px;height:16px;background:#f5f5f3;"></div>
<div class="b" style="left:307px;top:450px;width:35px;height:16px;background:#f5f5f3;"></div>
<div class="b" style="left:343px;top:450px;width:348px;height:16px;background:#f5f5f3;"></div>
<div class="b" style="left:692px;top:450px;width:98px;height:16px;background:#f5f5f3;"></div>
<div class="b" style="left:157px;top:467px;width:62px;height:16px;background:#eeeeec;"></div>
<div class="b" style="left:220px;top:467px;width:86px;height:16px;background:#f5f5f3;"></div>
<div class="b" style="left:307px;top:467px;width:35px;height:16px;background:#f5f5f3;"></div>
<div class="b" style="left:343px;top:467px;width:348px;height:16px;background:#f5f5f3;"></div>
<div class="b" style="left:692px;top:467px;width:98px;height:16px;background:#f5f5f3;"></div>
<div class="b" style="left:157px;top:484px;width:62px;height:8px;background:#eeeeec;"></div>
<div class="b" style="left:220px;top:484px;width:86px;height:8px;background:#f5f5f3;"></div>
<div class="b" style="left:307px;top:484px;width:35px;height:8px;background:#f5f5f3;"></div>
<div class="b" style="left:343px;top:484px;width:348px;height:8px;background:#f5f5f3;"></div>
<div class="b" style="left:692px;top:484px;width:98px;height:8px;background:#f5f5f3;"></div>
<svg style="left:163px;top:302px" width="9" height="6" viewBox="0 0 9 6" fill="none"><path d="M0.700 0.700L4.500 4.500L8.300 0.700" stroke="#3c3c3c" stroke-width="1.900"/></svg>
<div class="b" style="left:790px;top:256px;width:3px;height:236px;background:#c6c6c6;"></div>
<div class="b" style="left:793px;top:256px;width:211px;height:236px;background:#ececec;"></div>
<div class="b" style="left:793px;top:256px;width:103px;height:24px;background:#fff;"></div>
<div class="b" style="left:897px;top:256px;width:107px;height:24px;background:#fff;"></div>
<div class="b" style="left:896px;top:256px;width:1px;height:24px;background:#e2e2e2;"></div>
<span class="t " style="left:799.40px;top:260px;font-size:11px;line-height:16px;color:#000;letter-spacing:-0.035px;">Attribut</span>
<span class="t " style="left:902.20px;top:260px;font-size:11px;line-height:16px;color:#000;letter-spacing:-0.074px;">Wert</span>
<svg style="left:840.5px;top:256px" width="8" height="5" viewBox="0 0 8 5" fill="none"><path d="M0.400 4.300L4 0.700L7.600 4.300" stroke="#3c3c3c" stroke-width="1.150"/></svg>
<div class="b" style="left:793px;top:280px;width:103px;height:17px;background:#a6a6a6;"></div>
<div class="b" style="left:897px;top:280px;width:107px;height:17px;background:#adadad;"></div>
<div class="b" style="left:793px;top:298px;width:103px;height:17px;background:#c2c2c2;"></div>
<div class="b" style="left:897px;top:298px;width:107px;height:17px;background:#c9c9c9;"></div>
<div class="b" style="left:793px;top:316px;width:103px;height:17px;background:#c2c2c2;"></div>
<div class="b" style="left:897px;top:316px;width:107px;height:17px;background:#c9c9c9;"></div>
<div class="b" style="left:793px;top:334px;width:103px;height:17px;background:#c2c2c2;"></div>
<div class="b" style="left:897px;top:334px;width:107px;height:17px;background:#c9c9c9;"></div>
<div class="b" style="left:793px;top:352px;width:103px;height:17px;background:#c2c2c2;"></div>
<div class="b" style="left:897px;top:352px;width:107px;height:17px;background:#c9c9c9;"></div>
<div class="b" style="left:793px;top:370px;width:103px;height:17px;background:#c2c2c2;"></div>
<div class="b" style="left:897px;top:370px;width:107px;height:17px;background:#c9c9c9;"></div>
<div class="b" style="left:793px;top:388px;width:103px;height:17px;background:#c2c2c2;"></div>
<div class="b" style="left:897px;top:388px;width:107px;height:17px;background:#c9c9c9;"></div>
<div class="b" style="left:793px;top:406px;width:103px;height:17px;background:#c2c2c2;"></div>
<div class="b" style="left:897px;top:406px;width:107px;height:17px;background:#c9c9c9;"></div>
<div class="b" style="left:793px;top:424px;width:103px;height:17px;background:#c2c2c2;"></div>
<div class="b" style="left:897px;top:424px;width:107px;height:17px;background:#c9c9c9;"></div>
<div class="b" style="left:793px;top:442px;width:103px;height:17px;background:#c2c2c2;"></div>
<div class="b" style="left:897px;top:442px;width:107px;height:17px;background:#c9c9c9;"></div>
<div class="b" style="left:793px;top:460px;width:103px;height:17px;background:#c2c2c2;"></div>
<div class="b" style="left:897px;top:460px;width:107px;height:17px;background:#c9c9c9;"></div>
<div class="b" style="left:793px;top:478px;width:103px;height:14px;background:#c2c2c2;"></div>
<div class="b" style="left:897px;top:478px;width:107px;height:14px;background:#c9c9c9;"></div>
<span class="t " style="left:799.40px;top:281px;font-size:11px;line-height:16px;color:#000;letter-spacing:-0.475px;">DokumentCode</span>
<span class="t " style="left:902.20px;top:281px;font-size:11px;line-height:16px;color:#000;letter-spacing:-1.000px;">TEST</span>
<div class="b" style="left:157px;top:492px;width:847px;height:3px;background:#f0f0f0;"></div>
<div class="b" style="left:157px;top:495px;width:84px;height:236px;background:#ececec;"></div>
<div class="b" style="left:157px;top:495px;width:84px;height:24px;background:#fff;"></div>
<span class="t " style="left:163.10px;top:499px;font-size:11px;line-height:16px;color:#000;letter-spacing:-0.063px;">Sprache</span>
<svg style="left:195.5px;top:495px" width="8" height="5" viewBox="0 0 8 5" fill="none"><path d="M0.400 4.300L4 0.700L7.600 4.300" stroke="#3c3c3c" stroke-width="1.150"/></svg>
<div class="b" style="left:157px;top:519px;width:84px;height:17px;background:#a4a4a4;"></div>
<div class="b" style="left:157px;top:537px;width:84px;height:17px;background:#c3c3c3;"></div>
<div class="b" style="left:157px;top:555px;width:84px;height:17px;background:#c3c3c3;"></div>
<div class="b" style="left:157px;top:573px;width:84px;height:17px;background:#c3c3c3;"></div>
<div class="b" style="left:157px;top:591px;width:84px;height:17px;background:#c3c3c3;"></div>
<div class="b" style="left:157px;top:609px;width:84px;height:17px;background:#c3c3c3;"></div>
<div class="b" style="left:157px;top:627px;width:84px;height:17px;background:#c3c3c3;"></div>
<div class="b" style="left:157px;top:645px;width:84px;height:17px;background:#c3c3c3;"></div>
<div class="b" style="left:157px;top:663px;width:84px;height:17px;background:#c3c3c3;"></div>
<div class="b" style="left:157px;top:681px;width:84px;height:17px;background:#c3c3c3;"></div>
<div class="b" style="left:157px;top:699px;width:84px;height:17px;background:#c3c3c3;"></div>
<div class="b" style="left:157px;top:717px;width:84px;height:14px;background:#c3c3c3;"></div>
<span class="t " style="left:163.10px;top:520px;font-size:11px;line-height:16px;color:#000;letter-spacing:-0.096px;">d (Std.)</span>
<span class="t " style="left:164.00px;top:538px;font-size:11px;line-height:16px;color:#000;">f</span>
<span class="t " style="left:164.00px;top:556px;font-size:11px;line-height:16px;color:#000;">i</span>
<div class="b" style="left:241px;top:495px;width:763px;height:236px;background:#cacaca;"></div>
<span class="t " style="left:248.10px;top:494px;font-size:11px;line-height:16px;color:#000;letter-spacing:-0.076px;">Sprachcode:</span>
<span class="t " style="left:315.60px;top:494px;font-size:11px;line-height:16px;color:#000;font-weight:bold;">d</span>
<div class="b" style="left:357px;top:498px;width:11px;height:11px;background:#fff;"></div>
<svg style="left:358px;top:499px" width="10" height="9" viewBox="0 0 10 9" fill="none"><path d="M0.600 4.800L3.200 7.400L8.800 1" stroke="#b0b0b0" stroke-width="1.200"/></svg>
<span class="t " style="left:372.40px;top:495px;font-size:11px;line-height:16px;color:#8c8c8c;letter-spacing:-0.193px;">Standard</span>
<span class="t " style="left:248.50px;top:511px;font-size:11px;line-height:16px;color:#000;font-weight:bold;letter-spacing:0.026px;">&lt;fieldref name="SALUTATION"/&gt;</span>
<span class="t " style="left:248.50px;top:525px;font-size:11px;line-height:16px;color:#000;font-weight:bold;letter-spacing:0.305px;">TEST Lorem ipsum dolor sit amet, consetetur sadipscing elitr, sed diam nonumy eirmod tempor invidunt ut labore et dolore magna</span>
<span class="t " style="left:248.50px;top:539px;font-size:11px;line-height:16px;color:#000;font-weight:bold;letter-spacing:0.286px;">aliquyam erat, sed diam voluptua. At vero eos et accusam et justo duo dolores et ea rebum. Stet clita kasd gubergren, no sea takimata</span>
<span class="t " style="left:248.50px;top:553px;font-size:11px;line-height:16px;color:#000;font-weight:bold;letter-spacing:0.374px;">sanctus est Lorem ipsum dolor sit amet.</span>
<span class="t " style="left:248.50px;top:581px;font-size:11px;line-height:16px;color:#000;font-weight:bold;letter-spacing:0.314px;">Lorem ipsum dolor sit amet, consetetur sadipscing elitr, sed diam nonumy eirmod tempor invidunt ut labore et dolore magna aliquyam</span>
<span class="t " style="left:248.50px;top:595px;font-size:11px;line-height:16px;color:#000;font-weight:bold;letter-spacing:0.296px;">erat, sed diam voluptua. At vero eos et accusam et justo duo dolores et ea rebum. Stet clita kasd gubergren, no sea takimata sanctus</span>
<span class="t " style="left:248.50px;top:609px;font-size:11px;line-height:16px;color:#000;font-weight:bold;letter-spacing:0.398px;">est Lorem ipsum dolor sit amet.</span>
<span class="t " style="left:248.50px;top:637px;font-size:11px;line-height:16px;color:#000;font-weight:bold;letter-spacing:0.314px;">Lorem ipsum dolor sit amet, consetetur sadipscing elitr, sed diam nonumy eirmod tempor invidunt ut labore et dolore magna aliquyam</span>
<span class="t " style="left:248.50px;top:651px;font-size:11px;line-height:16px;color:#000;font-weight:bold;letter-spacing:0.243px;">erat, sed diam voluptua.</span>
<span class="t " style="left:248.50px;top:679px;font-size:11px;line-height:16px;color:#000;font-weight:bold;letter-spacing:0.282px;">Freundliche Grüsse</span>
</body></html>
